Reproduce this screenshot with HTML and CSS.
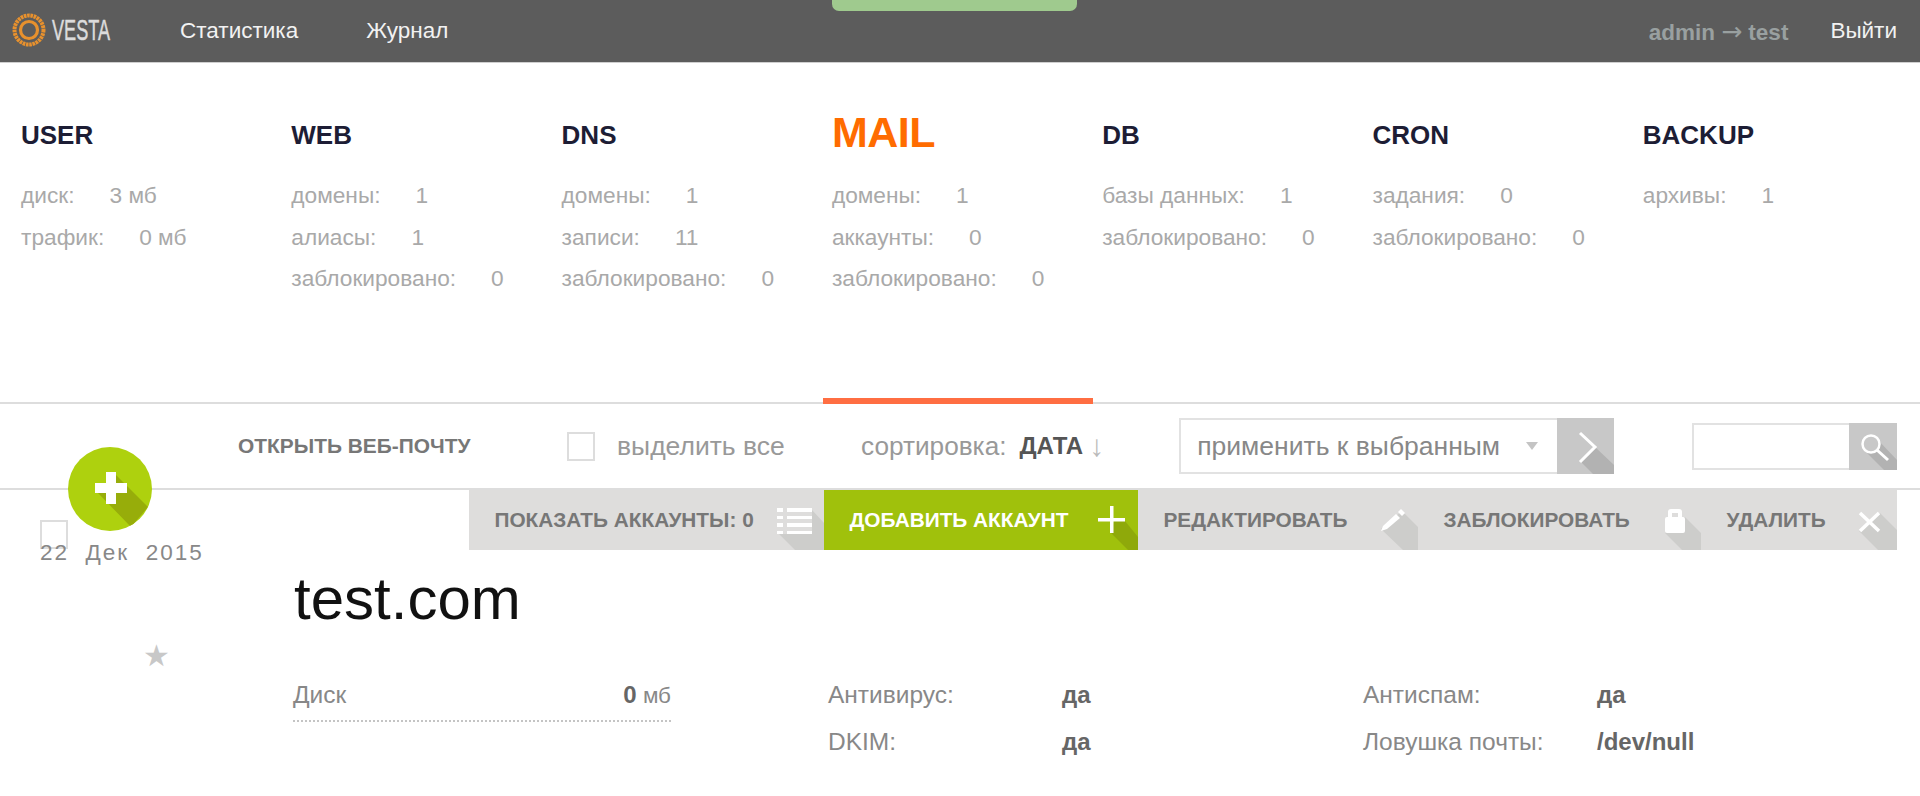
FILE: index.html
```html
<!DOCTYPE html>
<html lang="ru">
  <head>
    <meta charset="UTF-8" />
    <title>Vesta - MAIL</title>
    <link rel="stylesheet" href="styles.css">
  </head>
  <body>
    <div class="notice"></div>

    <div class="topbar">
      <svg class="logo" width="155" height="44" viewBox="0 0 155 44">
        <circle cx="29" cy="22" r="14.5" fill="none" stroke="#e8912d" stroke-width="4" stroke-dasharray="2.6 0.7" />
        <circle cx="29" cy="22" r="8.5" fill="none" stroke="#e8912d" stroke-width="3.2" />
        <text x="52" y="32" class="logo-text" textLength="58" lengthAdjust="spacingAndGlyphs">VESTA</text>
      </svg>
      <a class="top-link first">Статистика</a>
      <a class="top-link">Журнал</a>
      <span class="user-info">admin <span class="user-arrow">→</span> test</span>
      <a class="top-link logout">Выйти</a>
    </div>

    <div class="tabs">
      <div class="tab">
        <h2>USER</h2>
        <div class="stat"><span>диск:</span>3 мб</div>
        <div class="stat"><span>трафик:</span>0 мб</div>
      </div>
      <div class="tab">
        <h2>WEB</h2>
        <div class="stat"><span>домены:</span>1</div>
        <div class="stat"><span>алиасы:</span>1</div>
        <div class="stat"><span>заблокировано:</span>0</div>
      </div>
      <div class="tab">
        <h2>DNS</h2>
        <div class="stat"><span>домены:</span>1</div>
        <div class="stat"><span>записи:</span>11</div>
        <div class="stat"><span>заблокировано:</span>0</div>
      </div>
      <div class="tab active">
        <h2>MAIL</h2>
        <div class="stat"><span>домены:</span>1</div>
        <div class="stat"><span>аккаунты:</span>0</div>
        <div class="stat"><span>заблокировано:</span>0</div>
      </div>
      <div class="tab">
        <h2>DB</h2>
        <div class="stat"><span>базы данных:</span>1</div>
        <div class="stat"><span>заблокировано:</span>0</div>
      </div>
      <div class="tab">
        <h2>CRON</h2>
        <div class="stat"><span>задания:</span>0</div>
        <div class="stat"><span>заблокировано:</span>0</div>
      </div>
      <div class="tab">
        <h2>BACKUP</h2>
        <div class="stat"><span>архивы:</span>1</div>
      </div>
    </div>

    <div class="toolbar">
      <a class="add-round">
        <svg width="84" height="84" viewBox="0 0 84 84">
          <polygon points="30,46 63,80 80,60 48,28 48,46" fill="#97ad0a" />
          <path d="M38 25h10v11h11v10H48v11H38V46H27V36h11z" fill="#fff" />
        </svg>
      </a>
      <a class="webmail">ОТКРЫТЬ ВЕБ-ПОЧТУ</a>
      <span class="checkbox select-all"></span>
      <span class="select-label">выделить все</span>
      <span class="sort-label">сортировка:</span>
      <b class="sort-value">ДАТА</b>
      <span class="sort-arrow">↓</span>
      <div class="bulk">
        <span class="bulk-text">применить к выбранным</span>
        <span class="bulk-caret"></span>
      </div>
      <a class="bulk-go">
        <svg width="57" height="56" viewBox="0 0 57 56">
          <polygon points="23,43 36,56 57,56 57,47 38,29" fill="#b2b2b2" />
          <path d="M23 15 38 29 23 44" fill="none" stroke="#fff" stroke-width="3" />
        </svg>
      </a>
      <div class="search-box"></div>
      <a class="search-go">
        <svg width="48" height="47" viewBox="0 0 48 47">
          <polygon points="16,28 35,47 48,47 48,37 28,16" fill="#b2b2b2" />
          <circle cx="22" cy="21" r="8.5" fill="#c8c8c8" stroke="#fff" stroke-width="2.5" />
          <path d="M28 27 39 37" stroke="#fff" stroke-width="3" />
        </svg>
      </a>
    </div>

    <div class="row">
      <div class="row-left">
        <span class="checkbox"></span>
        <div class="date">22 &nbsp;Дек &nbsp;2015</div>
        <div class="star">★</div>
      </div>

      <div class="row-main">
        <div class="actions">
          <a class="action first-action">
            ПОКАЗАТЬ АККАУНТЫ: 0
            <svg width="60" height="60" viewBox="0 0 60 60">
              <polygon points="15,44 31,60 60,60 60,33 48,20 48,44" fill="#cdcdcb" />
              <path d="M13 18h6v4h-6zM13 26h6v3h-6zM13 33h6v4h-6zM13 41h6v3h-6zM23 18h25v4H23zM23 26h25v3H23zM23 33h25v4H23zM23 41h25v3H23z" fill="#fff" />
            </svg>
          </a>
          <a class="action green">
            ДОБАВИТЬ АККАУНТ
            <svg width="60" height="60" viewBox="0 0 60 60">
              <polygon points="33,43 50,60 60,60 60,47 47,31 36,31" fill="#8fa90a" />
              <path d="M32 16h3.5v12H47v3.500H35.500V43H32V31.500H20V28h12z" fill="#fff" />
            </svg>
          </a>
          <a class="action">
            РЕДАКТИРОВАТЬ
            <svg width="60" height="60" viewBox="0 0 60 60">
              <polygon points="23,39 45,60 60,60 60,37 44,21" fill="#cdcdcb" />
              <path d="M23 41 25 36 38 24 42 28 29 39z" fill="#fff" />
              <path d="M40 22 43 19 47 23 44 26z" fill="#fff" />
            </svg>
          </a>
          <a class="action">
            ЗАБЛОКИРОВАТЬ
            <svg width="60" height="60" viewBox="0 0 60 60">
              <polygon points="24,43 41,60 60,60 60,43 44,27" fill="#cdcdcb" />
              <path d="M27 27v-5q0-3 3-3h8q3 0 3 3v5h1q2 0 2 2v12q0 2-2 2H26q-2 0-2-2V29q0-2 2-2zm4 0h6v-4h-6z" fill="#fff" />
            </svg>
          </a>
          <a class="action">
            УДАЛИТЬ
            <svg width="60" height="60" viewBox="0 0 60 60">
              <polygon points="22,41 41,60 60,60 60,40 43,23" fill="#cdcdcb" />
              <path d="M23 23 42 41M42 23 23 41" stroke="#fff" stroke-width="3.500" fill="none" />
            </svg>
          </a>
        </div>

        <h1 class="domain">test.com</h1>

        <div class="details">
          <div class="disk">
            <span>Диск</span>
            <span class="disk-value"><b>0</b> мб</span>
          </div>
          <div class="props first-props">
            <span>Антивирус:</span><b>да</b>
            <span>DKIM:</span><b>да</b>
          </div>
          <div class="props">
            <span>Антиспам:</span><b>да</b>
            <span>Ловушка почты:</span><b>/dev/null</b>
          </div>
        </div>
      </div>
    </div>
  </body>
</html>
```

FILE: styles.css
```css
* {
  box-sizing: border-box;
}
html, body {
  margin: 0;
  height: 100%;
  overflow: hidden;
}
body {
  font-family: "Liberation Sans", Arial, sans-serif;
  background: #fff;
  color: #777;
}
h1, h2 {
  margin: 0;
}

/* top bar */
.notice {
  position: absolute;
  top: 0;
  left: 832px;
  width: 245px;
  height: 11px;
  background: #9fca8e;
  border-radius: 0 0 7px 7px;
}
.topbar {
  display: flex;
  align-items: center;
  height: 63px;
  padding-right: 23px;
  background: #5c5c5c;
  border-bottom: 1px solid #cfcfcf;
}
.logo {
  flex: none;
  margin-top: -2px;
}
.logo-text {
  font-size: 30px;
  font-family: "Liberation Sans", Arial, sans-serif;
  fill: #dcdcdc;
  stroke: #dcdcdc;
  stroke-width: 0.5px;
}
.top-link {
  font-size: 22.5px;
  color: #f2f2f2;
  margin-left: 68px;
}
.top-link.first {
  margin-left: 25px;
}
.user-info {
  margin-left: auto;
  font-size: 22.5px;
  font-weight: bold;
  color: #99a0a0;
}
.user-arrow {
  font-family: "DejaVu Sans", sans-serif;
  font-size: 25px;
  font-weight: normal;
}
.top-link.logout {
  margin-left: 42px;
}

/* tabs */
.tabs {
  display: flex;
  height: 341px;
  padding-left: 12px;
  border-bottom: 2px solid #ddd;
}
.tab {
  position: relative;
  width: 270.3px;
  padding: 57px 0 0 9px;
}
.tab h2 {
  height: 62px;
  font-size: 26px;
  line-height: 30px;
  color: #1d1d35;
}
.tab.active::after {
  content: "";
  position: absolute;
  left: 0;
  right: 0;
  bottom: -2px;
  height: 6px;
  background: #ff6e42;
}
.tab.active h2 {
  margin-top: -10px;
  height: 72px;
  font-size: 43px;
  line-height: 44px;
  letter-spacing: -0.5px;
  color: #ff6c00;
}
.stat {
  height: 41.6px;
  font-size: 22.7px;
  line-height: 26px;
  color: #a9a9a9;
}
.stat span {
  margin-right: 35px;
}

/* toolbar */
.toolbar {
  position: relative;
  display: flex;
  align-items: center;
  height: 86px;
  padding-left: 238px;
  border-bottom: 2px solid #ddd;
}
.add-round {
  position: absolute;
  left: 68px;
  top: 43px;
  width: 84px;
  height: 84px;
  border-radius: 50%;
  background: #aed10e;
  overflow: hidden;
  z-index: 2;
}
.add-round svg {
  display: block;
}
.webmail {
  flex: none;
  width: 329px;
  font-size: 20.9px;
  font-weight: bold;
  color: #777;
}
.checkbox {
  display: block;
  flex: none;
  width: 28px;
  height: 29px;
  background: #fff;
  border: 2px solid #ddd;
}
.select-label {
  flex: none;
  margin-left: 22px;
  width: 244px;
  font-size: 26.5px;
  color: #999;
}
.sort-label {
  flex: none;
  font-size: 26.2px;
  color: #999;
}
.sort-value {
  flex: none;
  margin-left: 13px;
  font-size: 24px;
  color: #555;
}
.sort-arrow {
  flex: none;
  margin-left: 6px;
  width: 90px;
  font-size: 30px;
  color: #bbb;
}
.bulk {
  position: relative;
  display: flex;
  flex: none;
  align-items: center;
  width: 378px;
  height: 56px;
  padding-left: 16px;
  border: 2px solid #e2e2e2;
  border-right: 0;
}
.bulk-text {
  font-size: 26.5px;
  color: #888;
}
.bulk-caret {
  margin-left: 26px;
  border-left: 6.5px solid transparent;
  border-right: 6.5px solid transparent;
  border-top: 8px solid #c4c4c4;
}
.bulk-go {
  display: block;
  flex: none;
  width: 57px;
  height: 56px;
  margin-right: 78px;
  background: #c8c8c8;
}
.search-box {
  flex: none;
  width: 157px;
  height: 47px;
  border: 2px solid #e2e2e2;
  border-right: 0;
}
.search-go {
  display: block;
  flex: none;
  width: 48px;
  height: 47px;
  background: #c8c8c8;
}
.bulk-go svg, .search-go svg {
  display: block;
}

/* mail row */
.row {
  display: flex;
}
.row-left {
  flex: none;
  width: 293px;
  padding: 30px 0 0 40px;
}
.date {
  margin-top: -8px;
  font-size: 22.5px;
  line-height: 24px;
  letter-spacing: 2px;
  color: #888;
}
.star {
  margin: 74px 0 0 103px;
  font-size: 30px;
  line-height: 34px;
  color: #c8c8c8;
}
.row-main {
  flex: 1;
}
.actions {
  display: flex;
  margin-left: 176px;
  margin-right: 23px;
  height: 60px;
}
.action {
  display: flex;
  flex: none;
  align-items: center;
  justify-content: space-between;
  height: 60px;
  padding-left: 25.5px;
  font-size: 20.8px;
  font-weight: bold;
  color: #777;
  background: #dedddc;
}
.action svg {
  flex: none;
}
.action:nth-child(1) { width: 355px; }
.action:nth-child(2) { width: 314px; }
.action:nth-child(3) { width: 280px; }
.action:nth-child(4) { width: 283px; }
.action:nth-child(5) { width: 196px; }
.action.green {
  color: #fff;
  background: #a0c10c;
}
.domain {
  margin: 14px 0 0 1px;
  font-size: 60px;
  font-weight: normal;
  line-height: 70px;
  color: #111;
}
.details {
  display: flex;
  margin-top: 47px;
  font-size: 24.5px;
  line-height: 28px;
  color: #888;
}
.disk {
  display: flex;
  flex: none;
  justify-content: space-between;
  width: 378px;
  height: 41px;
  border-bottom: 2px dotted #c4c4c4;
}
.disk-value {
  font-size: 22.5px;
}
.disk b, .props b {
  font-size: 24px;
  color: #666;
}
.props {
  display: grid;
  flex: none;
  grid-template-columns: 234px 1fr;
  row-gap: 18.5px;
  width: 535px;
}
.first-props {
  margin-left: 157px;
}
```
